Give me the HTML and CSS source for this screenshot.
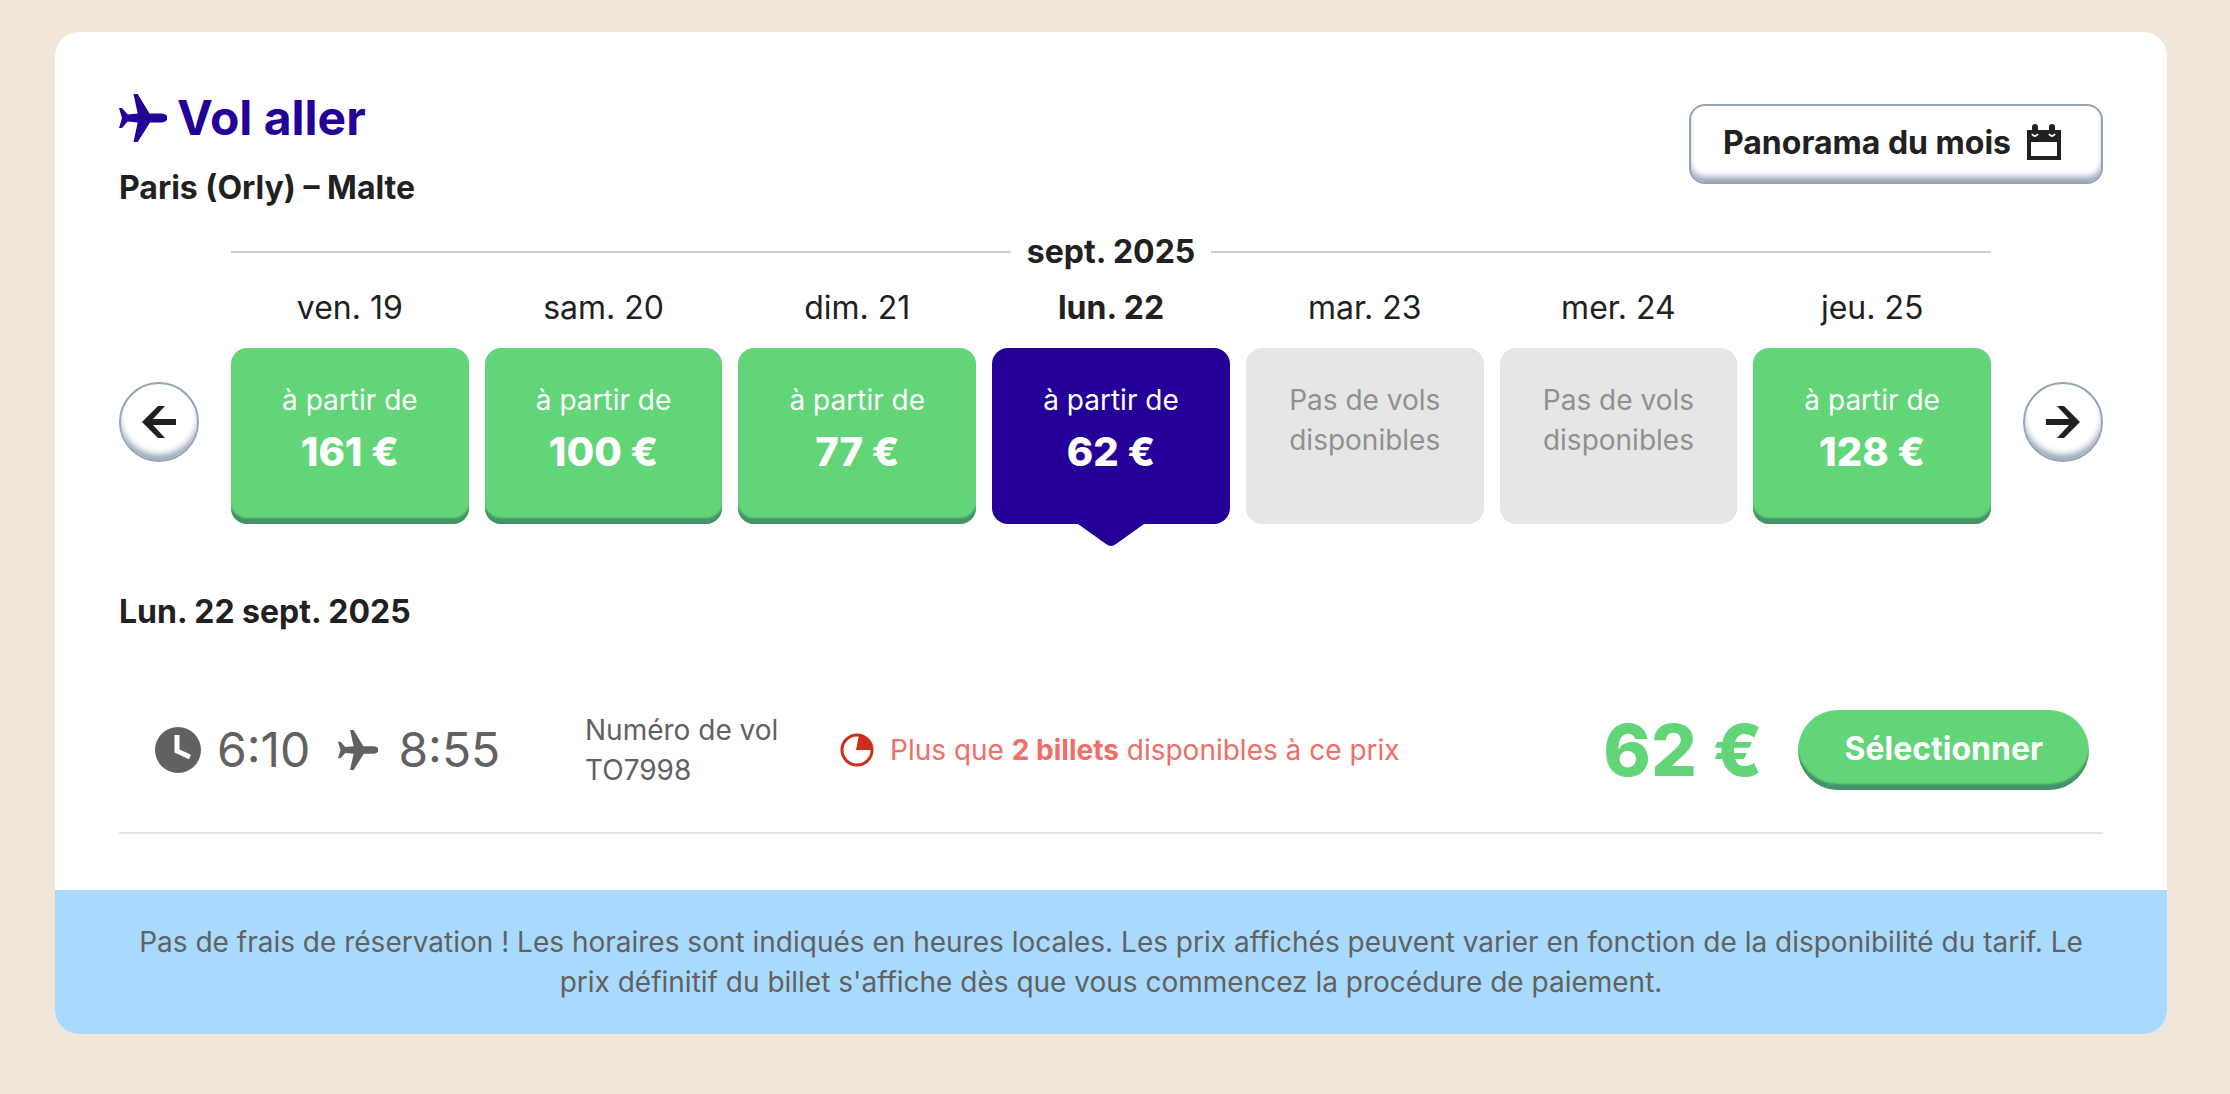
FILE: index.html
```html
<!DOCTYPE html>
<html lang="fr">
<head>
<meta charset="utf-8">
<meta name="viewport" content="width=device-width, initial-scale=1.0">
<title>Vol aller</title>
<link rel="stylesheet" href="styles.css">
</head>
<body>
<svg class="sprite" aria-hidden="true">
  <symbol id="avion" viewBox="0 0 48 48">
    <path d="M14.500 0h4.200L30.500 19.500h12c3.500 0 6 2 6 4.500s-2.500 4.500-6 4.500h-11.500L18.700 48h-4.200l4.200-19.500-10-1L3 34H0l3-10-3-10h3l5.700 6.500 10-1z"/>
  </symbol>
</svg>
<main class="card">
  <div class="card-body">
    <header class="header">
      <div class="header-text">
        <h1 class="title"><svg class="title-icon"><use href="#avion"/></svg>Vol aller</h1>
        <p class="route">Paris (Orly) – Malte</p>
      </div>
      <button class="btn-month" type="button">
        Panorama du mois
        <svg class="calendar" viewBox="0 0 34 36">
          <path d="M0 6h5V3a3 3 0 0 1 6 0v3h11V3a3 3 0 0 1 6 0v3h6v30H0zM4 18v14h26V18z" fill-rule="evenodd"/>
          <path d="M5 10q3 4 6 0M22 10q3 4 6 0" fill="none" stroke="#fff" stroke-width="2"/>
        </svg>
      </button>
    </header>

    <section class="calendar-row">
      <button class="arrow" type="button" aria-label="Jours précédents">
        <svg viewBox="0 0 34 34"><path d="M0 17 16 1h7L11 14h23v6H11l12 13h-7z"/></svg>
      </button>
      <div class="week">
        <h2 class="month">sept. 2025</h2>
        <div class="days">
          <div class="day"><span class="day-name">ven. 19</span><button class="day-box" type="button">à partir de<strong>161 €</strong></button></div>
          <div class="day"><span class="day-name">sam. 20</span><button class="day-box" type="button">à partir de<strong>100 €</strong></button></div>
          <div class="day"><span class="day-name">dim. 21</span><button class="day-box" type="button">à partir de<strong>77 €</strong></button></div>
          <div class="day selected"><span class="day-name">lun. 22</span><button class="day-box" type="button">à partir de<strong>62 €</strong><svg class="pointer" viewBox="0 0 66 22"><path d="M0 0h66L38 20q-5 4-10 0z"/></svg></button></div>
          <div class="day"><span class="day-name">mar. 23</span><button class="day-box" type="button" disabled><span>Pas de vols<br>disponibles</span></button></div>
          <div class="day"><span class="day-name">mer. 24</span><button class="day-box" type="button" disabled><span>Pas de vols<br>disponibles</span></button></div>
          <div class="day"><span class="day-name">jeu. 25</span><button class="day-box" type="button">à partir de<strong>128 €</strong></button></div>
        </div>
      </div>
      <button class="arrow" type="button" aria-label="Jours suivants">
        <svg viewBox="0 0 34 34"><path d="M34 17 18 1h-7l12 13H0v6h23L11 33h7z"/></svg>
      </button>
    </section>

    <h3 class="date">Lun. 22 sept. 2025</h3>

    <section class="flight">
      <div class="times">
        <svg class="clock" viewBox="0 0 46 46"><circle cx="23" cy="23" r="23"/><path d="M22 8v16l13 6" fill="none" stroke="#fff" stroke-width="5"/></svg>
        <span>6:10</span>
        <svg class="plane-small"><use href="#avion"/></svg>
        <span>8:55</span>
      </div>
      <p class="number">Numéro de vol<br>TO7998</p>
      <p class="seats">
        <svg class="pie" viewBox="0 0 34 34"><circle cx="17" cy="17" r="15" fill="none" stroke="#cd3019" stroke-width="3"/><path d="M16 17 19 2a15 15 0 0 1 13 15z" fill="#cd3019"/></svg>
        <span>Plus que <b>2 billets</b> disponibles à ce prix</span>
      </p>
      <span class="price">62 €</span>
      <button class="btn-select" type="button">Sélectionner</button>
    </section>
  </div>
  <footer class="note">Pas de frais de réservation ! Les horaires sont indiqués en heures locales. Les prix affichés peuvent varier en fonction de la disponibilité du tarif. Le prix définitif du billet s'affiche dès que vous commencez la procédure de paiement.</footer>
</main>
</body>
</html>
```

FILE: styles.css
```css
* {
    box-sizing: border-box;
}
body {
    margin: 0;
    padding: 32px 63px 32px 55px;
    background: #f0e6da;
    color: #212121;
    font-family: Inter, sans-serif;
    font-size: 28px;
    line-height: 40px;
}
h1, h2, h3, p {
    margin: 0;
}
button {
    font-family: inherit;
    color: inherit;
    cursor: pointer;
}
svg {
    display: block;
    flex: none;
    fill: currentColor;
}
.sprite {
    display: none;
}
.card {
    background: #fff;
    border-radius: 24px;
    overflow: hidden;
}
.card-body {
    padding: 56px 64px;
}
.header {
    display: flex;
    justify-content: space-between;
    align-items: flex-start;
}
.title {
    display: flex;
    align-items: center;
    gap: 10px;
    color: #240099;
    font-size: 48px;
    line-height: 60px;
}
.title-icon {
    width: 48px;
    height: 48px;
    overflow: visible;
}
.route {
    margin-top: 20px;
    font-size: 32px;
    font-weight: 700;
}
.btn-month {
    display: flex;
    align-items: center;
    gap: 16px;
    height: 80px;
    margin-top: 16px;
    padding: 0 40px 4px 32px;
    background: #fff;
    border: 2px solid #96a3b7;
    border-radius: 16px;
    box-shadow: inset 0 -7px 6px -2px #96a3b7;
    font-size: 32px;
    font-weight: 700;
}
.calendar {
    width: 34px;
    height: 36px;
}
.calendar-row {
    display: flex;
    align-items: flex-end;
    gap: 32px;
    margin-top: 24px;
}
.arrow {
    display: flex;
    align-items: center;
    justify-content: center;
    flex: none;
    width: 80px;
    height: 80px;
    margin-bottom: 62px;
    padding: 0;
    background: #fff;
    border: 2px solid #96a3b7;
    border-radius: 50%;
    box-shadow: inset 0 -7px 6px -2px #96a3b7;
}
.arrow svg {
    width: 34px;
    height: 34px;
}
.week {
    flex: 1;
}
.month {
    display: flex;
    align-items: center;
    gap: 16px;
    font-size: 32px;
    line-height: 40px;
}
.month::before, .month::after {
    content: "";
    flex: 1;
    height: 2px;
    background: #ccc;
}
.days {
    display: grid;
    grid-template-columns: repeat(7, 1fr);
    gap: 16px;
    margin-top: 16px;
}
.day {
    text-align: center;
}
.day-name {
    display: block;
    margin-bottom: 20px;
    font-size: 32px;
}
.day-box {
    display: flex;
    flex-direction: column;
    align-items: center;
    position: relative;
    width: 100%;
    height: 176px;
    padding: 32px 0;
    border: none;
    border-radius: 16px;
    background: #62d579;
    box-shadow: inset 0 -7px 2px -1px #469268;
    color: #fff;
    font-size: 28px;
    line-height: 40px;
}
.day-box strong {
    margin-top: 8px;
    font-size: 40px;
    font-weight: 800;
    line-height: 48px;
}
.day-box:disabled {
    background: #e6e6e6;
    box-shadow: none;
    color: #909090;
}
.selected .day-name {
    font-weight: 700;
}
.selected .day-box {
    background: #240099;
    box-shadow: none;
}
.pointer {
    position: absolute;
    top: 100%;
    left: 50%;
    width: 66px;
    height: 22px;
    transform: translateX(-50%);
    fill: #240099;
}
.date {
    margin-top: 68px;
    font-size: 32px;
    line-height: 40px;
}
.flight {
    display: flex;
    align-items: center;
    margin-top: 36px;
    padding: 42px 14px 42px 36px;
    border-bottom: 2px solid #e5e5e5;
    color: #616161;
}
.times {
    display: flex;
    align-items: center;
    gap: 16px;
    width: 430px;
    font-size: 48px;
}
.clock {
    width: 46px;
    height: 46px;
}
.plane-small {
    width: 40px;
    height: 40px;
    margin: 0 4px 0 12px;
}
.number {
    width: 255px;
}
.seats {
    display: flex;
    align-items: center;
    gap: 16px;
    flex: 1;
    color: #f06d68;
}
.pie {
    width: 34px;
    height: 34px;
}
.price {
    margin-right: 36px;
    color: #62d579;
    font-size: 72px;
    font-weight: 800;
}
.btn-select {
    height: 80px;
    padding: 0 46px 4px;
    border: none;
    border-radius: 40px;
    background: #62d579;
    box-shadow: inset 0 -7px 2px -1px #469268;
    color: #fff;
    font-size: 32px;
    font-weight: 700;
}
.note {
    padding: 32px 64px;
    background: #a8dafd;
    color: #616161;
    text-align: center;
}
```
